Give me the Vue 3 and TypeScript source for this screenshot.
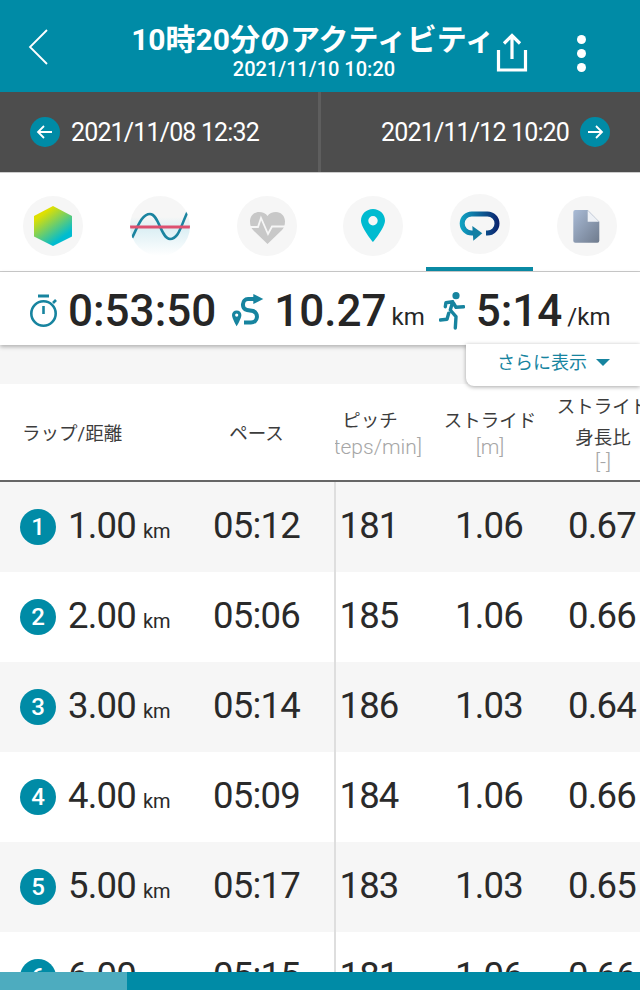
<script setup lang="ts">
interface Lap { n: number; dist: string; pace: string; pitch: string; stride: string; ratio: string }
const laps: Lap[] = [
  { n: 1, dist: '1.00', pace: '05:12', pitch: '181', stride: '1.06', ratio: '0.67' },
  { n: 2, dist: '2.00', pace: '05:06', pitch: '185', stride: '1.06', ratio: '0.66' },
  { n: 3, dist: '3.00', pace: '05:14', pitch: '186', stride: '1.03', ratio: '0.64' },
  { n: 4, dist: '4.00', pace: '05:09', pitch: '184', stride: '1.06', ratio: '0.66' },
  { n: 5, dist: '5.00', pace: '05:17', pitch: '183', stride: '1.03', ratio: '0.65' },
  { n: 6, dist: '6.00', pace: '05:15', pitch: '181', stride: '1.06', ratio: '0.66' },
]
</script>

<template>
  <div class="screen">
    <header class="appbar">
      <svg class="back" width="24" height="40" viewBox="0 0 24 40"><path d="M20 3 3 20l17 17" fill="none" stroke="#fff" stroke-width="1.800"/></svg>
      <div class="titles">
        <div class="title">10時20分のアクティビティ</div>
        <div class="subtitle">2021/11/10 10:20</div>
      </div>
      <svg class="share" width="34" height="42" viewBox="0 0 34 42"><path d="M17 27V4M9 11.500 17 3.500l8 8M3.500 18v20h27V18" fill="none" stroke="#fff" stroke-width="3.200"/></svg>
      <div class="dots"><i></i><i></i><i></i></div>
    </header>

    <nav class="datebar">
      <div class="prev">
        <svg width="30" height="30" viewBox="0 0 30 30"><circle cx="15" cy="15" r="15" fill="#008ba6"/><path d="M22 15H8M14 9l-6 6 6 6" fill="none" stroke="#fff" stroke-width="1.800"/></svg>
        <span>2021/11/08 12:32</span>
      </div>
      <div class="next">
        <span>2021/11/12 10:20</span>
        <svg width="30" height="30" viewBox="0 0 30 30"><circle cx="15" cy="15" r="15" fill="#008ba6"/><path d="M8 15h14M16 9l6 6-6 6" fill="none" stroke="#fff" stroke-width="1.800"/></svg>
      </div>
    </nav>

    <div class="tabs">
      <div class="tab">
        <div class="disc">
          <svg width="60" height="60" viewBox="0 0 60 60"><defs><linearGradient id="hx" x1="0.2" y1="0.1" x2="0.75" y2="0.9"><stop offset="0.1" stop-color="#dfe000"/><stop offset="0.9" stop-color="#00bcd0"/></linearGradient></defs><path d="M30 10 49 20v20.500L30 50 11 40.500V20z" fill="url(#hx)"/></svg>
        </div>
      </div>
      <div class="tab">
        <div class="disc wave">
          <svg width="60" height="60" viewBox="0 0 60 60"><path d="M2 42C8 30 12 18 20 18c9 0 11 25 20 25s11-14 18-28" fill="none" stroke="#1b84a0" stroke-width="2.600"/><path d="M0 31h60" stroke="#dd5070" stroke-width="3"/></svg>
        </div>
      </div>
      <div class="tab">
        <div class="disc">
          <svg width="60" height="60" viewBox="0 0 60 60"><path d="M30.500 48 16 34c-2-2-3-5-3-8.500C13 20 17 16 22 16c3.500 0 7 1.500 8.500 4 1.500-2.500 5-4 8.500-4 5 0 9 4 9 9.500 0 3.500-1 6.500-3 8.500z" fill="#c8c8c8"/><path d="M12 31h9l3-9 7 16 4-7.500h13" fill="none" stroke="#f6f6f6" stroke-width="1.800"/></svg>
        </div>
      </div>
      <div class="tab">
        <div class="disc">
          <svg width="60" height="60" viewBox="0 0 60 60"><path fill-rule="evenodd" d="M30 13c-6.500 0-12 5-12 11.500C18 32 30 46 30 46s12-14 12-21.500C42 18 36.500 13 30 13zm0 7a4.700 4.700 0 1 1 0 9.400 4.700 4.700 0 0 1 0-9.400z" fill="#00bbd0"/></svg>
        </div>
      </div>
      <div class="tab active">
        <div class="disc raised">
          <svg width="60" height="60" viewBox="0 0 60 60"><defs><linearGradient id="lp" x1="10" y1="0" x2="50" y2="0" gradientUnits="userSpaceOnUse"><stop offset="0" stop-color="#10a5c4"/><stop offset="1" stop-color="#0b1f6b"/></linearGradient></defs><path d="M26 39H21.700a9.500 9.500 0 0 1 0-19H37.500a9.500 9.500 0 0 1 0 19H36" fill="none" stroke="url(#lp)" stroke-width="5"/><path d="M22.300 32l10 7.300-9 7.400z" fill="#127fa3"/></svg>
        </div>
      </div>
      <div class="tab">
        <div class="disc">
          <svg width="60" height="60" viewBox="0 0 60 60"><defs><linearGradient id="dc" x1="0" y1="0" x2="1" y2="1"><stop offset="0" stop-color="#a9bbd6"/><stop offset="1" stop-color="#6f7b8d"/></linearGradient></defs><path d="M18.300 14h12.400l11.600 11.700V44.700a2 2 0 0 1-2 2H18.300a2 2 0 0 1-2-2V16a2 2 0 0 1 2-2z" fill="url(#dc)"/><path d="M30.700 14.500 42 25.700H30.700z" fill="#eef1f6"/></svg>
        </div>
      </div>
    </div>

    <section class="summary">
      <svg width="30" height="34" viewBox="0 0 30 34"><g fill="none" stroke="#17849f" stroke-width="2.600"><circle cx="14.500" cy="19.500" r="12.200"/><path d="M14.500 12v8"/><path d="M9 2h11" stroke-width="3"/><path d="M24 9l3-3"/></g></svg>
      <b class="big first">0:53:50</b>
      <svg class="gap" width="33" height="34" viewBox="0 0 33 34"><path d="M23 5H17C11 5 10 15 16 16l6 1c6 2 5 11.500-2 11.500H13" fill="none" stroke="#17849f" stroke-width="4"/><path d="M32.300 5 22.300 0v10z" fill="#17849f"/><path fill-rule="evenodd" d="M5.700 16.500c-2.800 0-4.700 2-4.700 4.500 0 3.500 4.700 11.300 4.700 11.300S10.400 24.500 10.400 21c0-2.500-1.900-4.500-4.700-4.500zm0 3a1.600 1.600 0 1 1 0 3.200 1.600 1.600 0 0 1 0-3.200z" fill="#17849f"/></svg>
      <b class="big">10.27</b><span class="unit km-u">km</span>
      <svg class="gap2" width="26" height="42" viewBox="0 0 26 42"><circle cx="17" cy="5.700" r="3.600" fill="#17849f"/><path d="M6.300 16.700l.6-4 6.800-1-2.400 8.300 5.700 6.700-.7 11.300M9.700 23.300 8 29.300l-6.700.7M14.700 13.300 17 17.300l7.700-.6" fill="none" stroke="#17849f" stroke-width="3.400" stroke-linecap="round" stroke-linejoin="round"/></svg>
      <b class="big pace">5:14</b><span class="unit">/km</span>
    </section>

    <div class="band">
      <div class="more">さらに表示<i class="caret"></i></div>
    </div>

    <div class="table">
      <div class="row head">
        <div class="frozen">
          <div class="lap">ラップ/距離</div>
          <div class="pace-h">ペース</div>
        </div>
        <div class="scroll">
          <div class="track">
            <div class="col c1">ピッチ<small>[steps/min]</small></div>
            <div class="col c2">ストライド<small>[m]</small></div>
            <div class="col c3 tall">ストライド<span>身長比</span><small>[-]</small></div>
          </div>
        </div>
      </div>
      <div v-for="l in laps" :key="l.n" class="row data">
        <div class="frozen">
          <div class="lap">
            <span class="badge">{{ l.n }}</span>
            <span class="num">{{ l.dist }}</span><span class="km">km</span>
          </div>
          <div class="num pace-c">{{ l.pace }}</div>
        </div>
        <div class="scroll">
          <div class="track">
            <div class="num c1">{{ l.pitch }}</div>
            <div class="num c2">{{ l.stride }}</div>
            <div class="num c3">{{ l.ratio }}</div>
          </div>
        </div>
      </div>
    </div>

    <footer class="progress"><div class="fill"></div></footer>
  </div>
</template>

<style scoped>
.screen {
  width: 640px;
  height: 990px;
  display: flex;
  flex-direction: column;
  overflow: hidden;
  background: #fff;
  color: #262626;
  font-family: Roboto, "Noto Sans CJK JP", sans-serif;
}
.appbar {
  height: 92px;
  flex: none;
  background: #008ba6;
  color: #fff;
  display: flex;
  align-items: center;
}
.back { margin-left: 27px; flex: none; margin-top: 2px; }
.titles {
  width: 364px;
  margin-left: 80px;
  margin-top: 10px;
  text-align: center;
  flex: none;
}
.title { font-size: 30px; font-weight: 700; line-height: 36px; white-space: nowrap; }
.subtitle { font-size: 20px; font-weight: 500; line-height: 22px; padding-left: 2px; }
.share { flex: none; margin-top: 13px; }
.dots { margin-left: 48px; display: flex; flex-direction: column; gap: 5px; margin-top: 14px; }
.dots i { display: block; width: 9px; height: 9px; border-radius: 50%; background: #fff; }
.datebar {
  height: 80px;
  flex: none;
  background: #4d4d4d;
  color: #fff;
  display: grid;
  grid-template-columns: 318px 322px;
  font-size: 25px;
  letter-spacing: -0.850px;
  border-bottom: 1px solid #ccc;
  box-sizing: content-box;
}
.prev, .next { display: flex; align-items: center; gap: 11px; }
.prev { padding-left: 30px; }
.next { justify-content: flex-end; padding-right: 30px; border-left: 3px solid #5e5e5e; }
.tabs {
  height: 98px;
  flex: none;
  display: grid;
  grid-template-columns: repeat(6, 106.670px);
  border-bottom: 1px solid #ccc;
  box-sizing: content-box;
}
.tab { display: flex; justify-content: center; padding-top: 23px; position: relative; }
.disc { width: 60px; height: 60px; border-radius: 50%; background: #f6f6f6; overflow: hidden; }
.disc.wave { background: linear-gradient(#f6f6f6 35%, #dceff4 55%, #fff 100%); }
.disc svg { display: block; }
.disc.raised { margin-top: -2px; }
.tab.active::after {
  content: "";
  position: absolute;
  left: -1px;
  right: 0;
  bottom: 0;
  height: 4px;
  background: #0a8aa4;
}
.summary {
  height: 73px;
  flex: none;
  box-sizing: border-box;
  display: flex;
  align-items: center;
  padding: 5px 0 0 29px;
  background: #fff;
  box-shadow: 0 2px 4px rgba(0, 0, 0, .28);
  position: relative;
  z-index: 2;
}
.big { font-size: 44px; font-weight: 500; margin-left: 10px; }
.big.first { margin-left: 9px; }
.gap { margin-left: 15px; }
.gap2 { margin-left: 14px; }
.pace { margin-left: 11px; }
.unit { font-size: 24px; margin-left: 5px; margin-top: 12px; }
.band {
  height: 39px;
  flex: none;
  background: #f6f6f6;
  position: relative;
}
.more {
  position: absolute;
  right: 0;
  top: -1px;
  width: 174px;
  height: 42px;
  box-sizing: border-box;
  background: #fff;
  border-radius: 0 0 0 8px;
  box-shadow: 0 1px 4px rgba(0, 0, 0, .35);
  color: #17849f;
  font-size: 18px;
  display: flex;
  align-items: center;
  padding-left: 31px;
  padding-bottom: 9px;
  z-index: 3;
}
.caret {
  margin-left: 9px;
  margin-top: 4px;
  width: 0;
  height: 0;
  border-left: 7px solid transparent;
  border-right: 7px solid transparent;
  border-top: 7px solid #17849f;
}
.table { flex: 1; min-height: 0; overflow: hidden; }
.row { display: flex; }
.frozen {
  width: 335px;
  flex: none;
  display: grid;
  grid-template-columns: 180px 153px;
  align-items: center;
  box-sizing: border-box;
}
.scroll { flex: 1; min-width: 0; overflow: hidden; }
.track {
  margin-left: -26px;
  display: grid;
  grid-template-columns: 120px 120px 106px;
  align-items: center;
  height: 100%;
  width: 346px;
  text-align: center;
}
.head {
  height: 98px;
  border-bottom: 2px solid #666;
  box-sizing: border-box;
  font-size: 18.500px;
  color: #3c3c3c;
}
.head .lap { padding-left: 22px; }
.pace-h { text-align: center; }
.col { display: flex; flex-direction: column; align-items: center; white-space: nowrap; line-height: 26px; margin-top: 4px; }
.col.c1 { padding-left: 2px; }
.col.c2 { padding-left: 2px; }
.col.tall { line-height: 34px; margin-top: -2px; padding-left: 2px; }
.col.tall span { line-height: 28px; }
.col.tall small { line-height: 20px; }
.col small { font-size: 21px; color: #a6a6a6; font-weight: 300; }
.data { height: 90px; }
.data:nth-child(even) { background: #f6f6f6; }
.data .frozen { border-right: 2px solid #dedede; width: 336px; margin-right: -1px; }
.data .lap { padding-left: 20px; display: flex; align-items: baseline; }
.badge {
  width: 36px;
  height: 36px;
  border-radius: 50%;
  background: #008ba6;
  color: #fff;
  font-size: 24px;
  font-weight: 500;
  display: flex;
  align-items: center;
  justify-content: center;
  margin-right: 12px;
  align-self: center;
}
.num { font-size: 36.500px; letter-spacing: -0.800px; line-height: 40px; color: #2a2a2a; margin-bottom: 2px; }
.km { font-size: 20px; margin-left: 7px; color: #2a2a2a; }
.pace-c { text-align: center; }
.progress { height: 18px; flex: none; background: #008ba6; }
.fill { width: 127px; height: 100%; background: #4dacbf; }
</style>
